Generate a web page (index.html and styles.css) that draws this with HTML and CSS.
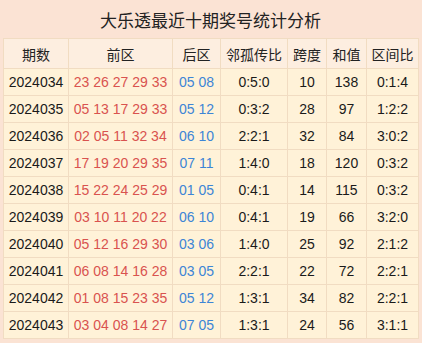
FILE: index.html
```html
<!DOCTYPE html>
<html>
<head>
<meta charset="utf-8">
<link rel="stylesheet" href="styles.css">
</head>
<body>
<div class="wrap">
  <div class="title">大乐透最近十期奖号统计分析</div>
  <table class="grid">
    <colgroup>
      <col class="c1"><col class="c2"><col class="c3"><col class="c4"><col class="c5"><col class="c6"><col class="c7">
    </colgroup>
    <thead>
      <tr><th>期数</th><th>前区</th><th>后区</th><th>邻孤传比</th><th>跨度</th><th>和值</th><th>区间比</th></tr>
    </thead>
    <tbody>
      <tr><td>2024034</td><td class="red">23 26 27 29 33</td><td class="blue">05 08</td><td>0:5:0</td><td>10</td><td>138</td><td>0:1:4</td></tr>
      <tr><td>2024035</td><td class="red">05 13 17 29 33</td><td class="blue">05 12</td><td>0:3:2</td><td>28</td><td>97</td><td>1:2:2</td></tr>
      <tr><td>2024036</td><td class="red">02 05 11 32 34</td><td class="blue">06 10</td><td>2:2:1</td><td>32</td><td>84</td><td>3:0:2</td></tr>
      <tr><td>2024037</td><td class="red">17 19 20 29 35</td><td class="blue">07 11</td><td>1:4:0</td><td>18</td><td>120</td><td>0:3:2</td></tr>
      <tr><td>2024038</td><td class="red">15 22 24 25 29</td><td class="blue">01 05</td><td>0:4:1</td><td>14</td><td>115</td><td>0:3:2</td></tr>
      <tr><td>2024039</td><td class="red">03 10 11 20 22</td><td class="blue">06 10</td><td>0:4:1</td><td>19</td><td>66</td><td>3:2:0</td></tr>
      <tr><td>2024040</td><td class="red">05 12 16 29 30</td><td class="blue">03 06</td><td>1:4:0</td><td>25</td><td>92</td><td>2:1:2</td></tr>
      <tr><td>2024041</td><td class="red">06 08 14 16 28</td><td class="blue">03 05</td><td>2:2:1</td><td>22</td><td>72</td><td>2:2:1</td></tr>
      <tr><td>2024042</td><td class="red">01 08 15 23 35</td><td class="blue">05 12</td><td>1:3:1</td><td>34</td><td>82</td><td>2:2:1</td></tr>
      <tr><td>2024043</td><td class="red">03 04 08 14 27</td><td class="blue">07 05</td><td>1:3:1</td><td>24</td><td>56</td><td>3:1:1</td></tr>
    </tbody>
  </table>
</div>
</body>
</html>
```
FILE: styles.css
```css
html, body {
  margin: 0;
  padding: 0;
  background: #fbe3d4;
}
.wrap {
  width: 422px;
  height: 343px;
  padding: 0 4px 0 3px;
  box-sizing: border-box;
  font-family: "Liberation Sans", "Noto Sans CJK SC", sans-serif;
  color: #1a1a1a;
}
.title {
  height: 38px;
  line-height: 40px;
  text-align: center;
  font-size: 17px;
  font-family: "Noto Sans CJK SC", sans-serif;
  color: #222;
}
.grid {
  width: 415px;
  table-layout: fixed;
  border-collapse: collapse;
  font-size: 14px;
}
.c1 { width: 65px; }
.c2 { width: 104px; }
.c3 { width: 48px; }
.c4 { width: 67px; }
.c5 { width: 39px; }
.c6 { width: 40px; }
.c7 { width: 52px; }
.grid th, .grid td {
  border: 1px solid #f1dcc2;
  padding: 0;
  text-align: center;
  white-space: nowrap;
}
.grid th {
  height: 29px;
  background: #fdeee0;
  font-weight: normal;
  font-family: "Noto Sans CJK SC", sans-serif;
  font-size: 14px;
  color: #222;
}
.grid td {
  height: 26px;
  background: #fff2d8;
}
.grid .red { color: #d9534f; }
.grid .blue { color: #3d85d6; }
```
